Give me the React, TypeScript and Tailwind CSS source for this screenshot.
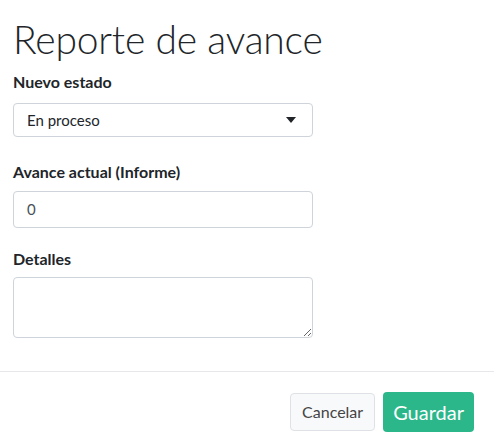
export default function App() {
  return (
    <div className="w-[494px] h-[448px] bg-white text-[#212529] font-['Lato','Liberation_Sans',sans-serif]">
      <div className="px-[13px] pt-[15px]">
        <h1 className="text-[39px] leading-[48px] font-light tracking-[-0.2px]">Reporte de avance</h1>

        <div className="w-[300px] mt-[9px]">
          <label className="block text-[16px] font-bold leading-[20px]">Nuevo estado</label>
          <div className="mt-[11px] h-[34px] flex items-center justify-between rounded-[4px] border border-[#ced4da] pl-[13px] pr-[16px] text-[15px]">
            <span>En proceso</span>
            <svg width="10" height="6" viewBox="0 0 10 6">
              <path d="M0 0h10L5 6z" fill="#212529" />
            </svg>
          </div>

          <label className="block mt-[25px] text-[16px] font-bold leading-[20px]">Avance actual (Informe)</label>
          <div className="mt-[9px] h-[37px] flex items-center rounded-[4px] border border-[#ced4da] pl-[13px] text-[15px] text-[#495057]">
            0
          </div>

          <label className="block mt-[21px] text-[16px] font-bold leading-[20px]">Detalles</label>
          <textarea className="mt-[8px] block w-full h-[61px] rounded-[4px] border border-[#ced4da] resize-y" />
        </div>
      </div>

      <div className="mt-[33px] border-t border-[#e5e7eb] flex justify-end gap-[8px] pr-[20px] pt-[21px]">
        <button className="h-[38px] px-[11px] rounded-[4px] border border-[#dee2e6] bg-[#f8f9fa] text-[16px] text-[#444]">Cancelar</button>
        <button className="h-[40px] -mt-[1px] px-[10px] rounded-[4px] bg-[#2bb78a] text-white text-[20px]">Guardar</button>
      </div>
    </div>
  );
}
